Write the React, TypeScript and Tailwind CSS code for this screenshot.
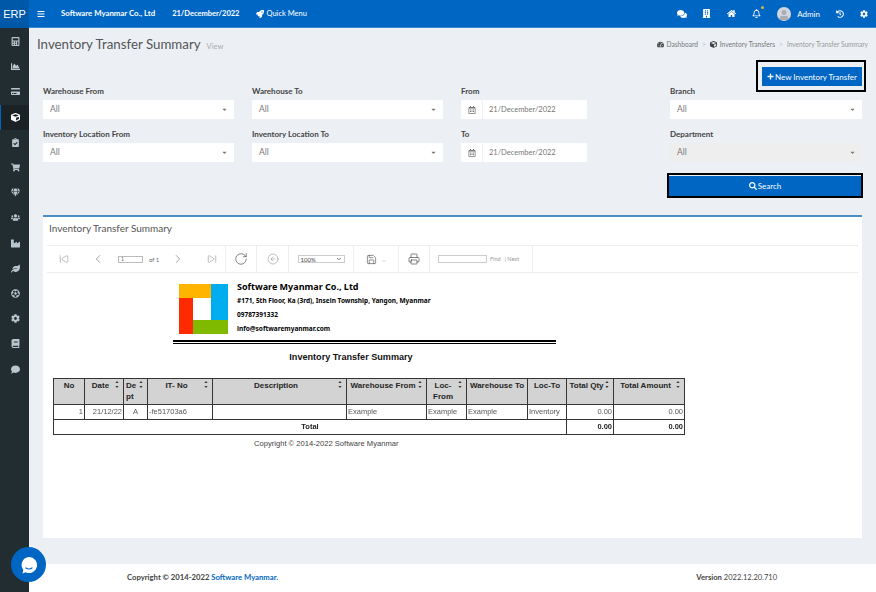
import { ChevronDown, ChevronLeft, ChevronRight, CircleArrowLeft, Printer, RotateCw, Save, SkipBack, SkipForward } from 'lucide-react';
import {
  FaBars, FaBook, FaBuilding, FaCalculator, FaCaretDown, FaChartArea, FaCog, FaComment, FaComments, FaCreditCard,
  FaCube, FaFutbol, FaGem, FaHistory, FaHome, FaIndustry, FaLeaf, FaPlus, FaRegBell, FaRegCalendarAlt, FaClipboardCheck,
  FaRocket, FaSearch, FaShoppingCart, FaTachometerAlt, FaUser, FaUsers,
} from 'react-icons/fa';

const sideIcons = [
  FaCalculator, FaChartArea, FaCreditCard, FaCube, FaClipboardCheck, FaShoppingCart, FaGem,
  FaUsers, FaIndustry, FaLeaf, FaFutbol, FaCog, FaBook, FaComment,
];

const SelectBox = ({ disabled }: { disabled?: boolean }) => (
  <div className={`flex h-[19px] items-center justify-between pl-[7px] pr-[6px] text-[8.5px] text-[#777] ${disabled ? 'bg-[#eeeeee]' : 'bg-white'}`}>
    <span>All</span>
    <FaCaretDown size={7} className="text-[#777]" />
  </div>
);

const Field = ({ label, disabled }: { label: string; disabled?: boolean }) => (
  <div className="flex flex-col">
    <label className="h-[14px] text-[8px] font-bold leading-[10px] text-[#444]">{label}</label>
    <SelectBox disabled={disabled} />
  </div>
);

const DateField = ({ label }: { label: string }) => (
  <div className="flex w-[126px] flex-col">
    <label className="h-[14px] text-[8px] font-bold leading-[10px] text-[#444]">{label}</label>
    <div className="flex h-[19px] bg-white text-[7.5px] text-[#777]">
      <div className="flex w-[22px] items-center justify-center border-r border-[#eef0f3]">
        <FaRegCalendarAlt size={8} className="text-[#777]" />
      </div>
      <span className="flex items-center pl-[6px]">21/December/2022</span>
    </div>
  </div>
);

const Sort = () => (
  <svg width="4" height="7" viewBox="0 0 4 7" className="shrink-0">
    <path d="M2 0l1.6 2H.4zM2 7L.4 5h3.2z" fill="#333" />
  </svg>
);

const Th = ({ children, sort = true, left }: { children: string; sort?: boolean; left?: boolean }) => (
  <th className="border border-[#333] bg-[#d3d3d3] px-[2px] pt-[1px] align-top text-[8px] font-bold leading-[11px] text-[#222]">
    <div className="flex items-start justify-between gap-[1px]">
      <span className={`flex-1 ${left ? 'text-left' : 'text-center'}`}>{children}</span>
      {sort && <span className="pr-[2px] pt-[1px]"><Sort /></span>}
    </div>
  </th>
);

const Td = ({ children, className = '' }: { children?: string; className?: string }) => (
  <td className={`border border-[#333] px-[1px] pb-[1px] text-[7.5px] text-[#555] ${className}`}>{children}</td>
);

const App = () => {
  return (
    <div className="relative flex h-screen w-full overflow-hidden bg-[#ecf0f5] font-['Lato',sans-serif] antialiased">
      {/* Sidebar */}
      <aside className="flex w-[29px] shrink-0 flex-col bg-[#222d32]">
        <div className="flex h-[28px] items-center justify-center bg-[#0058a8] font-['Liberation_Sans',sans-serif] text-[11px] text-white">ERP</div>
        <nav className="flex flex-col pt-[1px]">
          {sideIcons.map((Icon, i) => (
            <div
              key={i}
              className={`flex h-[25.2px] items-center justify-center border-l ${i === 3 ? 'border-[#0066c4] bg-[#1a2226] text-white' : 'border-transparent text-[#b8c7ce]'}`}
            >
              <Icon size={9} />
            </div>
          ))}
        </nav>
      </aside>

      <div className="flex min-w-0 flex-1 flex-col">
        {/* Top bar */}
        <header className="flex h-[28px] shrink-0 items-center border-b border-[#3d8bd4] bg-[#0066c4] text-[8px] text-white">
          <FaBars size={8} className="ml-[8px]" />
          <span className="ml-[16px] text-[7.8px] font-bold">Software Myanmar Co., Ltd</span>
          <span className="ml-[17px] text-[7.5px] font-bold">21/December/2022</span>
          <span className="ml-[17px] flex items-center gap-[2px] text-[7.5px]"><FaRocket size={8} />Quick Menu</span>
          <div className="ml-auto flex items-center">
            <FaComments size={10} />
            <FaBuilding size={9} className="ml-[15px]" />
            <FaHome size={9} className="ml-[16px]" />
            <span className="relative ml-[16px]">
              <FaRegBell size={9} />
              <span className="absolute -right-[3px] -top-[3px] h-[3px] w-[3px] rounded-full bg-[#d9b44a]" />
            </span>
            <span className="ml-[16px] flex h-[14px] w-[14px] items-center justify-center overflow-hidden rounded-full bg-[#d2d6de]">
              <FaUser size={10} className="mt-[3px] text-[#a9adb3]" />
            </span>
            <span className="ml-[6px]">Admin</span>
            <FaHistory size={8} className="ml-[16px]" />
            <FaCog size={8} className="ml-[16px] mr-[8px]" />
          </div>
        </header>

        <main className="flex-1 px-[14px]">
          {/* Page title */}
          <div className="-mx-[6px] flex h-[32px] items-center justify-between pt-[2px]">
            <div className="flex items-baseline gap-[6px]">
              <h1 className="text-[13.3px] leading-none text-[#555]">Inventory Transfer Summary</h1>
              <span className="text-[7.5px] text-[#aaa]">View</span>
            </div>
            <div className="flex items-center text-[6.6px] text-[#777]">
              <FaTachometerAlt size={7} className="mr-[3px] text-[#444]" />
              <span>Dashboard</span>
              <span className="mx-[4px] text-[#bbb]">&gt;</span>
              <FaCube size={7} className="mr-[3px] text-[#444]" />
              <span>Inventory Transfers</span>
              <span className="mx-[4px] text-[#bbb]">&gt;</span>
              <span className="text-[#999]">Inventory Transfer Summary</span>
            </div>
          </div>

          <div className="-mb-[6px] -mr-[4px] flex justify-end">
            <div className="border-[2px] border-black pb-[4px] pl-[4px] pr-[2px] pt-[5px]">
              <button className="flex h-[19px] w-[100px] items-center justify-center gap-[1px] bg-[#0066c4] text-[8px] text-white">
                <FaPlus size={7} />New Inventory Transfer
              </button>
            </div>
          </div>

          {/* Filters */}
          <div className="grid grid-cols-[191px_191px_191px_192px] gap-x-[18px] gap-y-[10px]">
            <Field label="Warehouse From" />
            <Field label="Warehouse To" />
            <DateField label="From" />
            <Field label="Branch" />
            <Field label="Inventory Location From" />
            <Field label="Inventory Location To" />
            <DateField label="To" />
            <Field label="Department" disabled />
          </div>

          <div className="mt-[11px] flex justify-end">
            <div className="-mr-[1px] border-[2px] border-black px-[0px] pt-[1px]">
              <button className="flex h-[20px] w-[192px] items-center justify-center gap-[1px] bg-[#0066c4] text-[8px] text-white">
                <FaSearch size={8} />Search
              </button>
            </div>
          </div>

          {/* Report card */}
          <section className="mt-[17px] h-[323px] border-t-2 border-[#4b8fc4] bg-white">
            <h2 className="pl-[6px] pt-[4px] text-[10px] leading-[14px] text-[#555]">Inventory Transfer Summary</h2>
            <div className="mx-[4px] mt-[10px] flex h-[28px] items-center border-y border-[#eeeeee] text-[#666]">
              <div className="flex h-full w-[179px] items-center border-r border-[#eeeeee]">
                <SkipBack size={10} strokeWidth={1} className="ml-[12px]" />
                <ChevronLeft size={14} strokeWidth={1} className="ml-[22px]" />
                <span className="ml-[13px] h-[7px] w-[25px] border border-[#bbb] pl-[2px] text-[5px] leading-[5px]">1</span>
                <span className="ml-[6px] text-[6px]">of 1</span>
                <ChevronRight size={14} strokeWidth={1} className="ml-[12px]" />
                <SkipForward size={10} strokeWidth={1} className="ml-[22px]" />
              </div>
              <div className="flex h-full w-[31px] items-center justify-center border-r border-[#eeeeee]">
                <RotateCw size={14} strokeWidth={1} className="text-[#333]" />
              </div>
              <div className="flex h-full w-[32px] items-center justify-center border-r border-[#eeeeee]">
                <CircleArrowLeft size={12} strokeWidth={0.8} />
              </div>
              <div className="flex h-full w-[65px] items-center justify-center border-r border-[#eeeeee]">
                <span className="flex h-[8px] w-[47px] items-center justify-between border border-[#ccc] px-[2px] text-[6px] text-[#444]">
                  100%<ChevronDown size={6} strokeWidth={3} />
                </span>
              </div>
              <div className="flex h-full w-[45px] items-center justify-center gap-[4px] border-r border-[#eeeeee]">
                <Save size={11} strokeWidth={1.2} className="text-[#333]" />
                <ChevronDown size={6} strokeWidth={1} className="mt-[3px]" />
              </div>
              <div className="flex h-full w-[31px] items-center justify-center border-r border-[#eeeeee]">
                <Printer size={12} strokeWidth={1.2} className="text-[#333]" />
              </div>
              <div className="flex h-full w-[103px] items-center gap-[2px] border-r border-[#eeeeee] pl-[8px] text-[5.5px] text-[#999]">
                <span className="h-[8px] w-[49px] border border-[#ccc]" />
                <span className="ml-[1px]">Find</span>
                <span className="ml-[2px]">| Next</span>
              </div>
            </div>

            {/* Report body */}
            <div className="ml-[128px] mt-[11px] flex items-start text-black">
              <div className="ml-[8px] shrink-0">
                <svg width="49" height="50" viewBox="0 0 49 50" className="block">
                  <rect width="49" height="50" fill="#fff" />
                  <rect x="0" y="0" width="32" height="14" fill="#ffb400" />
                  <rect x="32" y="0" width="17" height="36" fill="#00adef" />
                  <rect x="0" y="14" width="14" height="36" fill="#ff2a00" />
                  <rect x="14" y="36" width="35" height="14" fill="#7fba00" />
                </svg>
              </div>
              <div className="-mt-[4px] ml-[9px] flex flex-col font-['Noto_Sans',sans-serif]">
                <span className="text-[9px] font-bold leading-[14px]">Software Myanmar Co., Ltd</span>
                <span className="text-[6.5px] font-bold leading-[14px]">#171, 5th Floor, Ka (3rd), Insein Township, Yangon, Myanmar</span>
                <span className="text-[6.5px] font-bold leading-[14px]">09787391332</span>
                <span className="text-[6.5px] font-bold leading-[14px]">info@softwaremyanmar.com</span>
              </div>
            </div>
            <div className="ml-[130px] mt-[4px] h-[4px] w-[383px] border-y border-black border-t-2 bg-white" />
            <p className="ml-[128px] mt-[7px] w-[360px] text-center font-['Liberation_Sans',sans-serif] text-[9.1px] font-bold leading-[13px] text-[#111]">
              Inventory Transfer Summary
            </p>

            <table className="ml-[10px] mt-[14px] w-[631px] table-fixed border-collapse font-['Liberation_Sans',sans-serif] opacity-[0.99]">
              <colgroup>
                <col className="w-[31px]" />
                <col className="w-[39px]" />
                <col className="w-[24px]" />
                <col className="w-[65px]" />
                <col className="w-[134px]" />
                <col className="w-[80px]" />
                <col className="w-[40px]" />
                <col className="w-[61px]" />
                <col className="w-[39px]" />
                <col className="w-[47px]" />
                <col className="w-[71px]" />
              </colgroup>
              <thead>
                <tr className="h-[26px]">
                  <Th sort={false}>No</Th>
                  <Th>Date</Th>
                  <Th left>De pt</Th>
                  <Th>IT- No</Th>
                  <Th>Description</Th>
                  <Th>Warehouse From</Th>
                  <Th>Loc-From</Th>
                  <Th sort={false}>Warehouse To</Th>
                  <Th sort={false}>Loc-To</Th>
                  <Th>Total Qty</Th>
                  <Th>Total Amount</Th>
                </tr>
              </thead>
              <tbody>
                <tr className="h-[15px]">
                  <Td className="text-right">1</Td>
                  <Td className="text-right">21/12/22</Td>
                  <Td className="text-center">A</Td>
                  <Td>-fe51703a6</Td>
                  <Td />
                  <Td>Example</Td>
                  <Td>Example</Td>
                  <Td>Example</Td>
                  <Td>Inventory</Td>
                  <Td className="text-right">0.00</Td>
                  <Td className="text-right">0.00</Td>
                </tr>
                <tr className="h-[15px]">
                  <td colSpan={9} className="border border-[#333] pb-[1px] text-center text-[7.5px] font-bold text-[#222]">Total</td>
                  <td className="border border-[#333] px-[1px] pb-[1px] text-right text-[7.5px] font-bold text-[#222]">0.00</td>
                  <td className="border border-[#333] px-[1px] pb-[1px] text-right text-[7.5px] font-bold text-[#222]">0.00</td>
                </tr>
              </tbody>
            </table>
            <p className="ml-[211px] mt-[3px] font-['Liberation_Sans',sans-serif] text-[7.6px] text-[#444]">Copyright © 2014-2022 Software Myanmar</p>
          </section>
        </main>

        {/* Footer */}
        <footer className="flex h-[28px] shrink-0 items-center justify-between bg-white pl-[98px] pr-[99px] text-[7.7px] font-bold text-[#444]">
          <span>Copyright © 2014-2022 <span className="text-[#0066c4]">Software Myanmar.</span></span>
          <span>Version <span className="text-[7.5px] font-normal">2022.12.20.710</span></span>
        </footer>
      </div>

      {/* Chat bubble */}
      <div className="absolute left-[11px] top-[547px] flex h-[35px] w-[35px] items-center justify-center rounded-full bg-[#0066c4]">
        <svg width="18" height="18" viewBox="0 0 18 18">
          <path d="M9 1a8 8 0 1 1-3.4 15.2L2.5 17.5l.8-3.6A8 8 0 0 1 9 1z" fill="#fff" />
          <path d="M6 12c1.6 1.3 4.4 1.3 6 0" stroke="#0066c4" strokeWidth="1.2" fill="none" strokeLinecap="round" />
        </svg>
      </div>
    </div>
  );
};

export default App;
